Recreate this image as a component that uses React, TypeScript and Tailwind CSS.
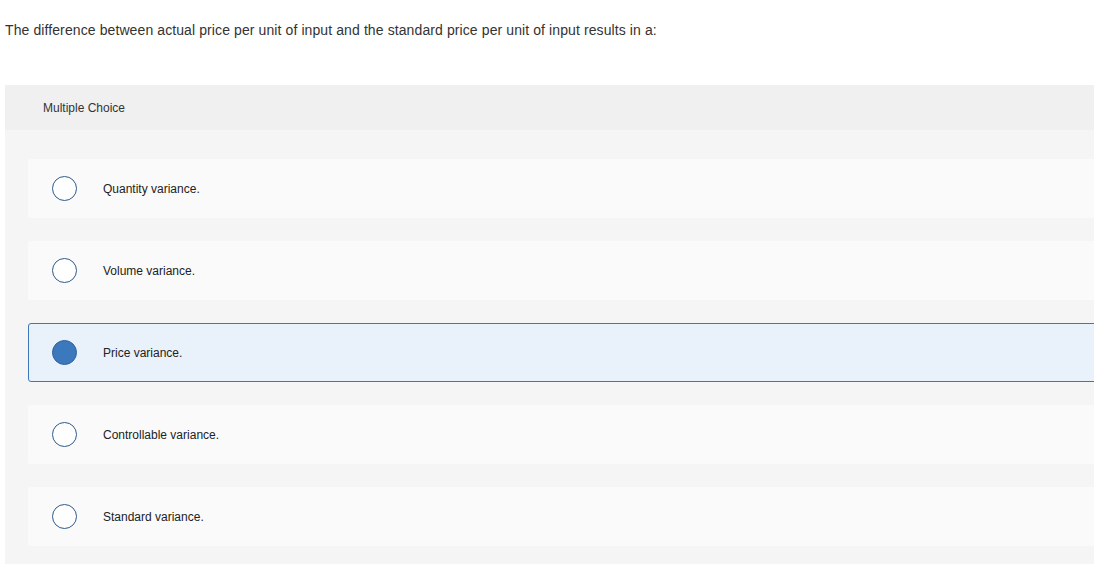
import React from 'react';

const options = [
    'Quantity variance.',
    'Volume variance.',
    'Price variance.',
    'Controllable variance.',
    'Standard variance.',
];

const App: React.FC = () => {
    const selected = 2;

    return (
        <div className="w-[1094px] h-[564px] overflow-hidden bg-white font-['Liberation_Sans',Arial,sans-serif] text-[#333]">
            <p className="pl-[5px] pt-[20px] text-[14px] tracking-[0.1px] leading-[20px] text-[#333]">
                The difference between actual price per unit of input and the standard price per unit of input results in a:
            </p>
            <div className="ml-[5px] mt-[45px] w-[1120px] bg-[#f5f5f5] h-[500px]">
                <div className="h-[45px] bg-[#f0f0f0] pl-[38px] flex items-center text-[12px] text-[#333]">
                    Multiple Choice
                </div>
                <div className="pl-[23px] pt-[29px] flex flex-col gap-[23px]">
                    {options.map((opt, i) => (
                        <div
                            key={opt}
                            className={
                                i === selected
                                    ? 'h-[59px] rounded-[3px] border border-[#3a77bd] bg-[#e9f1fb] flex items-center'
                                    : 'h-[59px] rounded-[3px] border border-transparent bg-[#fafafa] flex items-center'
                            }
                        >
                            <span
                                className={
                                    i === selected
                                        ? 'ml-[23px] w-[25px] h-[25px] rounded-full bg-[#3b78bc] border border-[#2f62a0]'
                                        : 'ml-[23px] w-[25px] h-[25px] rounded-full border-[1.5px] border-[#2d5a8c] bg-white'
                                }
                            />
                            <span className="ml-[26px] text-[12px] text-[#222]">{opt}</span>
                        </div>
                    ))}
                </div>
            </div>
        </div>
    );
};

export default App;
